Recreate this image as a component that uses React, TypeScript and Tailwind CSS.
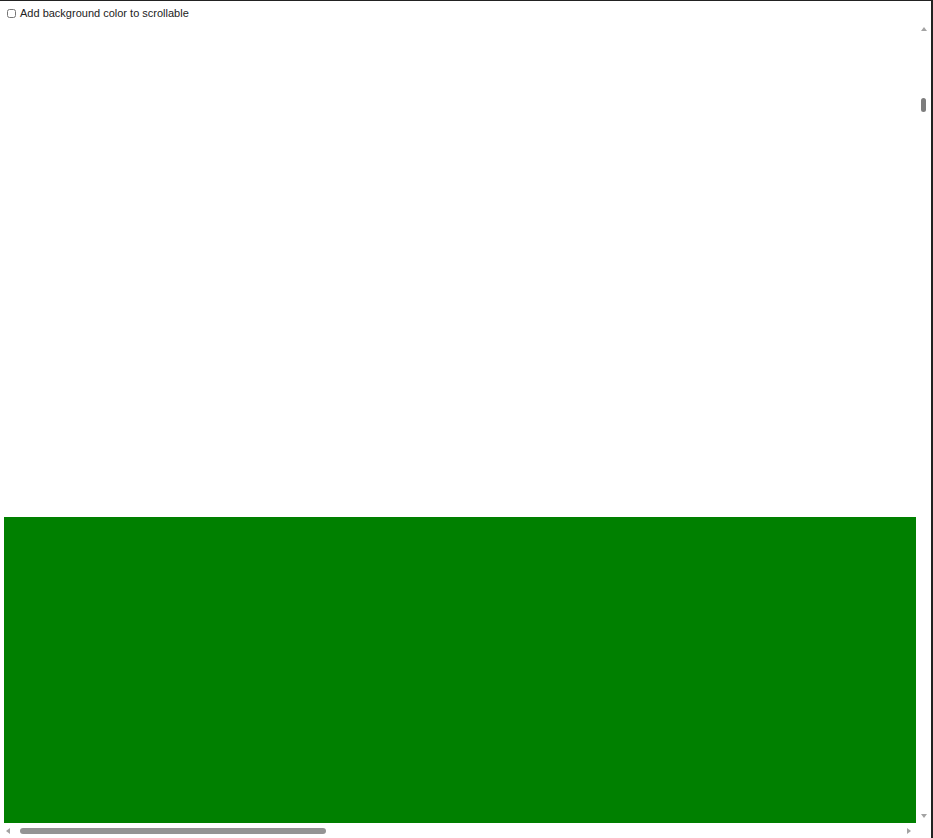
type Dir = "up" | "down" | "left" | "right";

const arrowPts: Record<Dir, string> = {
  up: "0,5 3,1 6,5",
  down: "0,1 3,5 6,1",
  left: "5,0 1,3 5,6",
  right: "1,0 5,3 1,6",
};

function ArrowButton({ dir }: { dir: Dir }) {
  return (
    <div className="w-[15px] h-[15px] shrink-0 flex items-center justify-center">
      <svg width="6" height="6" viewBox="0 0 6 6">
        <polygon points={arrowPts[dir]} fill="#a3a3a3" />
      </svg>
    </div>
  );
}

export default function App() {
  return (
    <div className="h-screen flex flex-col bg-white border-t border-r-2 border-[#222] font-['Liberation_Sans',Arial,sans-serif] text-[#222]">
      <label className="flex items-center h-[20px] pt-[4px] pl-[7px] gap-[4px] text-[11px] leading-none shrink-0">
        <input type="checkbox" className="w-[9px] h-[9px] m-0" />
        <span>Add background color to scrollable</span>
      </label>

      {/* scrollable area with its scrollbars */}
      <div className="flex-1 min-h-0 grid grid-cols-[1fr_15px] grid-rows-[1fr_15px]">
        <div className="overflow-hidden flex flex-col pl-1">
          <div className="h-[496px] shrink-0" />
          <div className="flex-1 bg-[#008000]" />
        </div>

        <div className="flex flex-col items-center">
          <ArrowButton dir="up" />
          <div className="flex-1 flex flex-col items-center">
            <div className="mt-[62px] w-[5px] h-[14px] rounded-full bg-[#7d7d7d]" />
          </div>
          <ArrowButton dir="down" />
        </div>

        <div className="flex items-center">
          <ArrowButton dir="left" />
          <div className="flex-1 flex items-center">
            <div className="ml-[5px] w-[306px] h-[6px] rounded-full bg-[#949494]" />
          </div>
          <ArrowButton dir="right" />
        </div>

        <div className="bg-white" />
      </div>
    </div>
  );
}
